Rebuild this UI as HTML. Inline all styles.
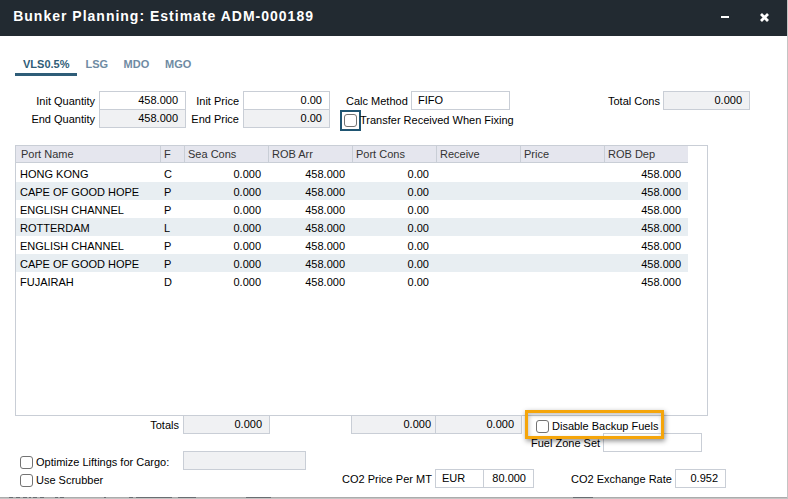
<!DOCTYPE html>
<html><head><meta charset="utf-8">
<style>
*{box-sizing:border-box}
html,body{margin:0;padding:0}
body{width:788px;height:499px;overflow:hidden;background:#fff;position:relative;font-family:"Liberation Sans",sans-serif;font-size:11px;color:#000}
.a{position:absolute}
#hdr{left:0;top:0;width:787px;height:36px;background:#222a31}
#title{left:13.2px;top:8px;font-size:14px;font-weight:bold;color:#fff;letter-spacing:1px;white-space:nowrap;line-height:16px}
#rb{left:787px;top:0;width:1px;height:499px;background:#c4c4c4}
.tab{top:58px;font-weight:bold;color:#6f8ba3;line-height:12px;white-space:nowrap}
#ul{left:15px;top:73px;width:62px;height:3px;background:#2f5d78}
.lbl{white-space:nowrap;line-height:13px;color:#000}
.r{text-align:right}
.inp{border:1px solid #c9ced6;background:#fff;height:19px;line-height:17px;padding:0 7px;white-space:nowrap;color:#000}
.ro{background:#f0f1f3}
.cb{width:13px;height:13px;border:1px solid #737373;border-radius:3px;background:#fff}
#grid{left:15px;top:145px;width:693px;height:271px;border:1px solid #c9ced6}
.gh{top:0;height:17px;background:#e5e6ee;border-bottom:1px solid #c9ced6}
.hc{position:absolute;top:0;height:17px;line-height:16px;padding-left:3px;border-left:1px solid #c9ced6;color:#333;white-space:nowrap}
.row{position:absolute;left:0;width:672px;height:18px;line-height:18px}
.alt{background:#e8eef2}
.c{position:absolute;top:1px;white-space:nowrap;color:#000}
</style></head><body>
<div id="hdr" class="a"></div>
<div id="title" class="a">Bunker Planning: Estimate ADM-000189</div>
<div class="a" style="left:721px;top:16px;width:8px;height:2px;background:#fff"></div>
<svg class="a" style="left:758px;top:11px" width="13" height="13" viewBox="0 0 13 13"><path d="M3 3L10 10M10 3L3 10" stroke="#fff" stroke-width="2.8"/></svg>
<div id="rb" class="a"></div>

<div class="a tab" style="left:23px;color:#2f5d78">VLS0.5%</div>
<div class="a tab" style="left:85.5px">LSG</div>
<div class="a tab" style="left:123.6px">MDO</div>
<div class="a tab" style="left:165px">MGO</div>
<div id="ul" class="a"></div>

<div class="a lbl r" style="left:0;width:95px;top:95px">Init Quantity</div>
<div class="a inp r" style="left:99px;top:91px;width:87px">458.000</div>
<div class="a lbl r" style="left:0;width:95px;top:113px">End Quantity</div>
<div class="a inp r ro" style="left:99px;top:109px;width:87px">458.000</div>

<div class="a lbl r" style="left:150px;width:89px;top:95px">Init Price</div>
<div class="a inp r" style="left:243px;top:91px;width:87px">0.00</div>
<div class="a lbl r" style="left:150px;width:89px;top:113px">End Price</div>
<div class="a inp r ro" style="left:243px;top:109px;width:87px">0.00</div>

<div class="a lbl" style="left:346px;top:95px">Calc Method</div>
<div class="a inp" style="left:411px;top:91px;width:99px;padding-left:6px">FIFO</div>
<div class="a" style="left:340px;top:110px;width:21px;height:21px;border:2px solid #1f5572"></div>
<div class="a cb" style="left:344px;top:114px"></div>
<div class="a lbl" style="left:360px;top:114px">Transfer Received When Fixing</div>

<div class="a lbl" style="left:608px;top:95px">Total Cons</div>
<div class="a inp r ro" style="left:663px;top:91px;width:87px">0.000</div>

<div id="grid" class="a">
 <div class="a gh" style="left:0;width:672px">
  <div class="hc" style="left:0;width:144px;border-left:none;padding-left:5px">Port Name</div>
  <div class="hc" style="left:144px;width:24px">F</div>
  <div class="hc" style="left:168px;width:84px">Sea Cons</div>
  <div class="hc" style="left:252px;width:84px">ROB Arr</div>
  <div class="hc" style="left:336px;width:84px">Port Cons</div>
  <div class="hc" style="left:420px;width:84px">Receive</div>
  <div class="hc" style="left:504px;width:84px">Price</div>
  <div class="hc" style="left:588px;width:84px">ROB Dep</div>
 </div>
<div class="row" style="top:18px"><div class="c" style="left:4px">HONG KONG</div><div class="c" style="left:148px">C</div><div class="c r" style="left:168px;width:77px">0.000</div><div class="c r" style="left:252px;width:77px">458.000</div><div class="c r" style="left:336px;width:77px">0.00</div><div class="c r" style="left:588px;width:77px">458.000</div></div>
<div class="row alt" style="top:36px"><div class="c" style="left:4px">CAPE OF GOOD HOPE</div><div class="c" style="left:148px">P</div><div class="c r" style="left:168px;width:77px">0.000</div><div class="c r" style="left:252px;width:77px">458.000</div><div class="c r" style="left:336px;width:77px">0.00</div><div class="c r" style="left:588px;width:77px">458.000</div></div>
<div class="row" style="top:54px"><div class="c" style="left:4px">ENGLISH CHANNEL</div><div class="c" style="left:148px">P</div><div class="c r" style="left:168px;width:77px">0.000</div><div class="c r" style="left:252px;width:77px">458.000</div><div class="c r" style="left:336px;width:77px">0.00</div><div class="c r" style="left:588px;width:77px">458.000</div></div>
<div class="row alt" style="top:72px"><div class="c" style="left:4px">ROTTERDAM</div><div class="c" style="left:148px">L</div><div class="c r" style="left:168px;width:77px">0.000</div><div class="c r" style="left:252px;width:77px">458.000</div><div class="c r" style="left:336px;width:77px">0.00</div><div class="c r" style="left:588px;width:77px">458.000</div></div>
<div class="row" style="top:90px"><div class="c" style="left:4px">ENGLISH CHANNEL</div><div class="c" style="left:148px">P</div><div class="c r" style="left:168px;width:77px">0.000</div><div class="c r" style="left:252px;width:77px">458.000</div><div class="c r" style="left:336px;width:77px">0.00</div><div class="c r" style="left:588px;width:77px">458.000</div></div>
<div class="row alt" style="top:108px"><div class="c" style="left:4px">CAPE OF GOOD HOPE</div><div class="c" style="left:148px">P</div><div class="c r" style="left:168px;width:77px">0.000</div><div class="c r" style="left:252px;width:77px">458.000</div><div class="c r" style="left:336px;width:77px">0.00</div><div class="c r" style="left:588px;width:77px">458.000</div></div>
<div class="row" style="top:126px"><div class="c" style="left:4px">FUJAIRAH</div><div class="c" style="left:148px">D</div><div class="c r" style="left:168px;width:77px">0.000</div><div class="c r" style="left:252px;width:77px">458.000</div><div class="c r" style="left:336px;width:77px">0.00</div><div class="c r" style="left:588px;width:77px">458.000</div></div>
</div>

<div class="a lbl r" style="left:100px;width:79px;top:419px">Totals</div>
<div class="a inp r ro" style="left:183px;top:415px;width:87px">0.000</div>
<div class="a inp r ro" style="left:351px;top:415px;width:85px;padding-right:4px">0.000</div>
<div class="a inp r ro" style="left:435px;top:415px;width:87px">0.000</div>

<div class="a cb" style="left:536px;top:420px"></div>
<div class="a lbl" style="left:552px;top:420px">Disable Backup Fuels</div>
<div class="a lbl" style="left:531px;top:437px">Fuel Zone Set</div>
<div class="a inp" style="left:603px;top:433px;width:99px"></div>

<div class="a cb" style="left:20px;top:456px"></div>
<div class="a lbl" style="left:36px;top:456px">Optimize Liftings for Cargo:</div>
<div class="a inp ro" style="left:183px;top:451px;width:123px"></div>
<div class="a cb" style="left:20px;top:474px"></div>
<div class="a lbl" style="left:36px;top:474px">Use Scrubber</div>

<div class="a lbl" style="left:342px;top:473px">CO2 Price Per MT</div>
<div class="a inp" style="left:435px;top:469px;width:49px;padding-left:6px">EUR</div>
<div class="a inp r" style="left:483px;top:469px;width:51px">80.000</div>
<div class="a lbl" style="left:571px;top:473px">CO2 Exchange Rate</div>
<div class="a inp r" style="left:675px;top:469px;width:51px">0.952</div>

<div class="a" style="left:0;top:497px;width:787px;height:1px;background:#acacac"></div><div class="a" style="left:0;top:498px;width:787px;height:1px;background:#c4c4c4"></div><div class="a" style="left:9px;top:497px;width:4px;height:1px;background:#6a6e72"></div><div class="a" style="left:16px;top:497px;width:4px;height:1px;background:#6a6e72"></div><div class="a" style="left:23px;top:497px;width:4px;height:1px;background:#6a6e72"></div><div class="a" style="left:29px;top:497px;width:2px;height:1px;background:#6a6e72"></div><div class="a" style="left:33px;top:497px;width:4px;height:1px;background:#6a6e72"></div><div class="a" style="left:40px;top:497px;width:4px;height:1px;background:#6a6e72"></div><div class="a" style="left:55px;top:497px;width:3px;height:1px;background:#6a6e72"></div><div class="a" style="left:60px;top:497px;width:4px;height:1px;background:#6a6e72"></div><div class="a" style="left:104px;top:497px;width:2px;height:1px;background:#6a6e72"></div><div class="a" style="left:129px;top:497px;width:4px;height:1px;background:#6a6e72"></div><div class="a" style="left:136px;top:497px;width:36px;height:1px;background:#6a6e72"></div><div class="a" style="left:178px;top:497px;width:18px;height:1px;background:#6a6e72"></div><div class="a" style="left:246px;top:497px;width:25px;height:1px;background:#6a6e72"></div><div class="a" style="left:573px;top:497px;width:20px;height:1px;background:#6a6e72"></div>
<div class="a" style="left:525px;top:410px;width:139px;height:29px;border:3px solid #f5a50a;box-shadow:1px 2px 5px rgba(0,0,0,.45), inset 1px 2px 4px rgba(0,0,0,.25)"></div>
</body></html>
